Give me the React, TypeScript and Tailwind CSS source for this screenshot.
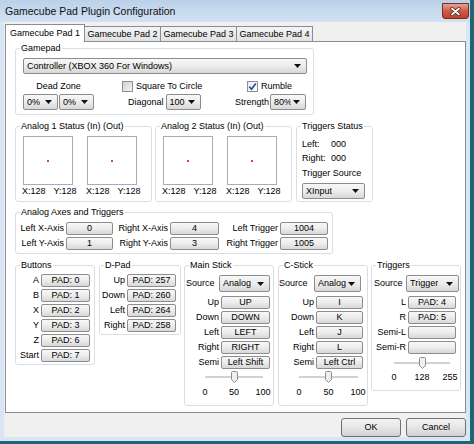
import React from "react";

type P = { className?: string; children?: React.ReactNode };

function Btn({ className = "", children }: P) {
  return (
    <div
      className={`flex h-[13px] shrink-0 items-center justify-center whitespace-nowrap rounded-[2px] border border-[#8d8d8d] bg-linear-to-b from-[#f8f8f8] via-[#ececec] to-[#d8d8d8] ${className}`}
    >
      {children}
    </div>
  );
}

function Combo({ className = "", value }: { className?: string; value: string }) {
  return (
    <div
      className={`flex shrink-0 items-center justify-between overflow-hidden rounded-[2px] border border-[#8d8d8d] bg-linear-to-b from-[#f8f8f8] via-[#ececec] to-[#d8d8d8] pl-[3px] pr-[5px] ${className}`}
    >
      <span className="overflow-hidden whitespace-nowrap">{value}</span>
      <svg width="7" height="4" viewBox="0 0 7 4" className="ml-[2px] shrink-0">
        <path d="M0 0H7L3.5 4Z" fill="#111" />
      </svg>
    </div>
  );
}

function Check({ checked = false }: { checked?: boolean }) {
  return (
    <div className="flex h-[11px] w-[11px] shrink-0 items-center justify-center border border-[#8e8f8f] bg-white">
      <div
        className={`flex h-[9px] w-[9px] items-center justify-center ${
          checked ? "bg-linear-to-br from-[#e6ecf4] to-white" : "bg-linear-to-br from-[#cdd1d6] to-[#f5f5f5]"
        }`}
      >
        {checked && (
          <svg width="9" height="9" viewBox="0 0 9 9">
            <path d="M1.3 4.6 L3.5 7.2 L7.8 1.4" fill="none" stroke="#2d4f93" strokeWidth="1.7" />
          </svg>
        )}
      </div>
    </div>
  );
}

function Group({ title, className = "", children }: P & { title: string }) {
  return (
    <fieldset className={`m-0 min-w-0 shrink-0 rounded-[3px] border border-[#d5dfe5] p-0 ${className}`}>
      <legend className="ml-[4px] p-0 px-[1px] leading-[11px]">{title}</legend>
      {children}
    </fieldset>
  );
}

function Slider({ className = "", labels, labelGap }: { className?: string; labels: string[]; labelGap: string }) {
  return (
    <div className={className}>
      <div className="relative flex h-[12px] items-center justify-center">
        <div className="absolute inset-x-0 top-[5px] h-[2px] bg-[#d2d2d2]" />
        <svg className="relative" width="7" height="12" viewBox="0 0 7 12">
          <path d="M.5 1.5Q.5.5 1.5.5h4q1 0 1 1v7l-3 3-3-3z" fill="#efefef" stroke="#8c8c8c" />
        </svg>
      </div>
      <div className={`flex justify-between ${labelGap}`}>
        {labels.map((l) => (
          <div key={l} className="flex w-0 justify-center whitespace-nowrap">
            {l}
          </div>
        ))}
      </div>
    </div>
  );
}

function Stick() {
  return (
    <div className="w-[50px]">
      <div className="flex h-[49px] w-[50px] items-center justify-center border border-[#a7adb7] bg-white">
        <div className="h-[2px] w-[2px] bg-[#d9425a]" />
      </div>
      <div className="-ml-[1px] mt-[1px] flex gap-[8px] whitespace-nowrap">
        <span>X:128</span>
        <span>Y:128</span>
      </div>
    </div>
  );
}

function MapRow({ label, value, btn }: { label: string; value: string; btn: string }) {
  return (
    <div className="flex items-center justify-end gap-[2px]">
      <span className="whitespace-nowrap">{label}</span>
      <Btn className={btn}>{value}</Btn>
    </div>
  );
}

export default function App() {
  const buttons = [
    ["A", "PAD: 0"],
    ["B", "PAD: 1"],
    ["X", "PAD: 2"],
    ["Y", "PAD: 3"],
    ["Z", "PAD: 6"],
    ["Start", "PAD: 7"],
  ];
  const dpad = [
    ["Up", "PAD: 257"],
    ["Down", "PAD: 260"],
    ["Left", "PAD: 264"],
    ["Right", "PAD: 258"],
  ];
  const main = [
    ["Up", "UP"],
    ["Down", "DOWN"],
    ["Left", "LEFT"],
    ["Right", "RIGHT"],
    ["Semi", "Left Shift"],
  ];
  const cstick = [
    ["Up", "I"],
    ["Down", "K"],
    ["Left", "J"],
    ["Right", "L"],
    ["Semi", "Left Ctrl"],
  ];
  const trig = [
    ["L", "PAD: 4"],
    ["R", "PAD: 5"],
    ["Semi-L", ""],
    ["Semi-R", ""],
  ];
  const axes = [
    ["Left X-Axis", "0", "Right X-Axis", "4", "Left Trigger", "1004"],
    ["Left Y-Axis", "1", "Right Y-Axis", "3", "Right Trigger", "1005"],
  ];

  return (
    <div className="h-[444px] w-[474px] overflow-hidden bg-[#1c6676] font-['Liberation_Sans',Arial,sans-serif] text-[9px] leading-[11px] text-black">
      <div className="flex h-[441px] w-[470px] flex-col bg-[#d8e5f2]">
        {/* title bar */}
        <div className="flex h-[22px] shrink-0 items-start bg-linear-to-b from-[#bbd1e9] to-[#d3e2f2]">
          <div className="ml-[5px] mt-[5px] whitespace-nowrap text-[10.5px] leading-[13px] text-[#111]">
            Gamecube Pad Plugin Configuration
          </div>
          <div className="ml-auto mr-[1px] mt-[3px] flex h-[16px] w-[27px] items-center justify-center rounded-b-[3px] border border-[#7d2a22] bg-linear-to-b from-[#e4a394] via-[#cf5a47] to-[#c0412d]">
            <svg width="11" height="9" viewBox="0 0 11 9">
              <path d="M2 1.5L9 7.5M9 1.5L2 7.5" stroke="#4a1712" strokeWidth="3.2" strokeLinecap="round" />
              <path d="M2 1.5L9 7.5M9 1.5L2 7.5" stroke="#fff" strokeWidth="1.8" strokeLinecap="round" />
            </svg>
          </div>
        </div>

        {/* client */}
        <div className="ml-[4px] flex h-[415px] w-[462px] flex-col bg-[#f0f0f0]">
          {/* tabs */}
          <div className="flex h-[19px] shrink-0 items-end pl-[1px]">
            <div className="relative z-10 -mb-[1px] flex h-[18px] w-[80px] items-center justify-center whitespace-nowrap border-x border-t border-[#898c95] bg-white pb-[1px]">
              Gamecube Pad 1
            </div>
            <div className="-ml-[1px] flex h-[15px] w-[77px] items-center justify-center whitespace-nowrap border-x border-t border-[#898c95] bg-linear-to-b from-[#f4f4f4] to-[#e2e2e2]">
              Gamecube Pad 2
            </div>
            <div className="-ml-[1px] flex h-[15px] w-[77px] items-center justify-center whitespace-nowrap border-x border-t border-[#898c95] bg-linear-to-b from-[#f4f4f4] to-[#e2e2e2]">
              Gamecube Pad 3
            </div>
            <div className="-ml-[1px] flex h-[15px] w-[77px] items-center justify-center whitespace-nowrap border-x border-t border-[#898c95] bg-linear-to-b from-[#f4f4f4] to-[#e2e2e2]">
              Gamecube Pad 4
            </div>
          </div>

          {/* panel */}
          <div className="ml-[1px] h-[372px] w-[461px] shrink-0 border border-[#898c95] bg-white pl-[9px] pt-[1px]">
            {/* Gamepad */}
            <Group title="Gamepad" className="w-[299px] pb-[4px]">
              <Combo value="Controller (XBOX 360 For Windows)" className="ml-[7px] mt-[4px] h-[16px] w-[284px]" />
              <div className="mt-[6px] flex items-end">
                <div className="ml-[7px] flex w-[71px] flex-col items-center">
                  <div className="mb-[2px]">Dead Zone</div>
                  <div className="flex gap-[1px]">
                    <Combo value="0%" className="h-[16px] w-[35px]" />
                    <Combo value="0%" className="h-[16px] w-[35px]" />
                  </div>
                </div>
                <div className="ml-[28px] flex w-[113px] flex-col items-start">
                  <div className="flex h-[13px] items-center gap-[3px] whitespace-nowrap">
                    <Check />
                    <span>Square To Circle</span>
                  </div>
                  <div className="ml-[6px] mt-[1px] flex items-center gap-[2px]">
                    <span>Diagonal</span>
                    <Combo value="100" className="h-[16px] w-[35px]" />
                  </div>
                </div>
                <div className="flex flex-col items-start">
                  <div className="ml-[12px] flex h-[13px] items-center gap-[3px]">
                    <Check checked />
                    <span>Rumble</span>
                  </div>
                  <div className="mt-[1px] flex items-center gap-[1px]">
                    <span>Strength</span>
                    <Combo value="80%" className="h-[16px] w-[36px]" />
                  </div>
                </div>
              </div>
            </Group>

            {/* status row */}
            <div className="mt-[6px] flex items-stretch">
              <Group title="Analog 1 Status (In) (Out)" className="w-[137px]">
                <div className="mt-[4px] flex gap-[14px] pb-[4px] pl-[7px]">
                  <Stick />
                  <Stick />
                </div>
              </Group>
              <Group title="Analog 2 Status (In) (Out)" className="ml-[3px] w-[137px]">
                <div className="mt-[4px] flex gap-[14px] pb-[4px] pl-[7px]">
                  <Stick />
                  <Stick />
                </div>
              </Group>
              <Group title="Triggers Status" className="ml-[4px] w-[77px]">
                <div className="pl-[5px] pt-[5px] leading-[14px]">
                  <div className="flex">
                    <span className="w-[29px]">Left:</span>
                    <span>000</span>
                  </div>
                  <div className="flex">
                    <span className="w-[29px]">Right:</span>
                    <span>000</span>
                  </div>
                  <div className="mt-[1px] whitespace-nowrap">Trigger Source</div>
                  <Combo value="XInput" className="mt-[3px] h-[16px] w-[63px] leading-[11px]" />
                </div>
              </Group>
            </div>

            {/* axes */}
            <Group title="Analog Axes and Triggers" className="mt-[5px] w-[318px] pb-[3px]">
              <div className="mt-[4px] flex flex-col gap-[2px]">
                {axes.map((r) => (
                  <div key={r[0]} className="flex">
                    <div className="flex w-[97px] items-center">
                      <span className="flex-1 whitespace-nowrap pr-[2px] text-right">{r[0]}</span>
                      <Btn className="w-[47px]">{r[1]}</Btn>
                    </div>
                    <div className="flex w-[106px] items-center">
                      <span className="flex-1 whitespace-nowrap pr-[2px] text-right">{r[2]}</span>
                      <Btn className="w-[49px]">{r[3]}</Btn>
                    </div>
                    <div className="flex w-[109px] items-center">
                      <span className="flex-1 whitespace-nowrap pr-[2px] text-right">{r[4]}</span>
                      <Btn className="w-[48px]">{r[5]}</Btn>
                    </div>
                  </div>
                ))}
              </div>
            </Group>

            {/* bottom row */}
            <div className="mt-[6px] flex items-start">
              <Group title="Buttons" className="w-[80px] pb-[2px]">
                <div className="mt-[3px] flex flex-col gap-[2px] pr-[4px]">
                  {buttons.map(([l, v]) => (
                    <MapRow key={l} label={l} value={v} btn="w-[49px]" />
                  ))}
                </div>
              </Group>
              <Group title="D-Pad" className="ml-[4px] w-[82px] pb-[2px]">
                <div className="mt-[3px] flex flex-col gap-[2px] pr-[4px]">
                  {dpad.map(([l, v]) => (
                    <MapRow key={l} label={l} value={v} btn="w-[49px]" />
                  ))}
                </div>
              </Group>
              <Group title="Main Stick" className="ml-[3px] w-[90px] pb-[7px]">
                <div className="mt-[4px] flex items-center justify-between pl-[1px] pr-[3px]">
                  <span>Source</span>
                  <Combo value="Analog" className="h-[17px] w-[51px]" />
                </div>
                <div className="mt-[4px] flex flex-col gap-[2px] pr-[3px]">
                  {main.map(([l, v]) => (
                    <MapRow key={l} label={l} value={v} btn="w-[49px]" />
                  ))}
                </div>
                <Slider className="ml-[20px] mt-[2px] w-[58px]" labels={["0", "50", "100"]} labelGap="mt-[4px]" />
              </Group>
              <Group title="C-Stick" className="ml-[4px] w-[90px] pb-[7px]">
                <div className="mt-[4px] flex items-center justify-between pr-[6px]">
                  <span>Source</span>
                  <Combo value="Analog" className="h-[17px] w-[47px]" />
                </div>
                <div className="mt-[4px] flex flex-col gap-[2px] pr-[4px]">
                  {cstick.map(([l, v]) => (
                    <MapRow key={l} label={l} value={v} btn="w-[47px]" />
                  ))}
                </div>
                <Slider className="ml-[20px] mt-[2px] w-[59px]" labels={["0", "50", "100"]} labelGap="mt-[4px]" />
              </Group>
              <Group title="Triggers" className="ml-[3px] w-[90px] pb-[7px]">
                <div className="mt-[4px] flex items-center justify-between pl-[2px] pr-[1px]">
                  <span>Source</span>
                  <Combo value="Trigger" className="h-[17px] w-[53px]" />
                </div>
                <div className="mt-[4px] flex flex-col gap-[2px] pr-[4px]">
                  {trig.map(([l, v]) => (
                    <MapRow key={l} label={l} value={v} btn="w-[48px]" />
                  ))}
                </div>
                <Slider className="ml-[22px] mt-[3px] w-[56px]" labels={["0", "128", "255"]} labelGap="mt-[3px]" />
              </Group>
            </div>
          </div>

          {/* dialog buttons */}
          <div className="mt-[5px] flex justify-end gap-[5px]">
            <div className="flex h-[19px] w-[60px] items-center justify-center rounded-[3px] border border-[#707070] bg-linear-to-b from-[#f3f3f3] via-[#e6e6e6] to-[#d2d2d2]">
              OK
            </div>
            <div className="flex h-[19px] w-[60px] items-center justify-center rounded-[3px] border border-[#707070] bg-linear-to-b from-[#f3f3f3] via-[#e6e6e6] to-[#d2d2d2]">
              Cancel
            </div>
          </div>
        </div>
      </div>
    </div>
  );
}
